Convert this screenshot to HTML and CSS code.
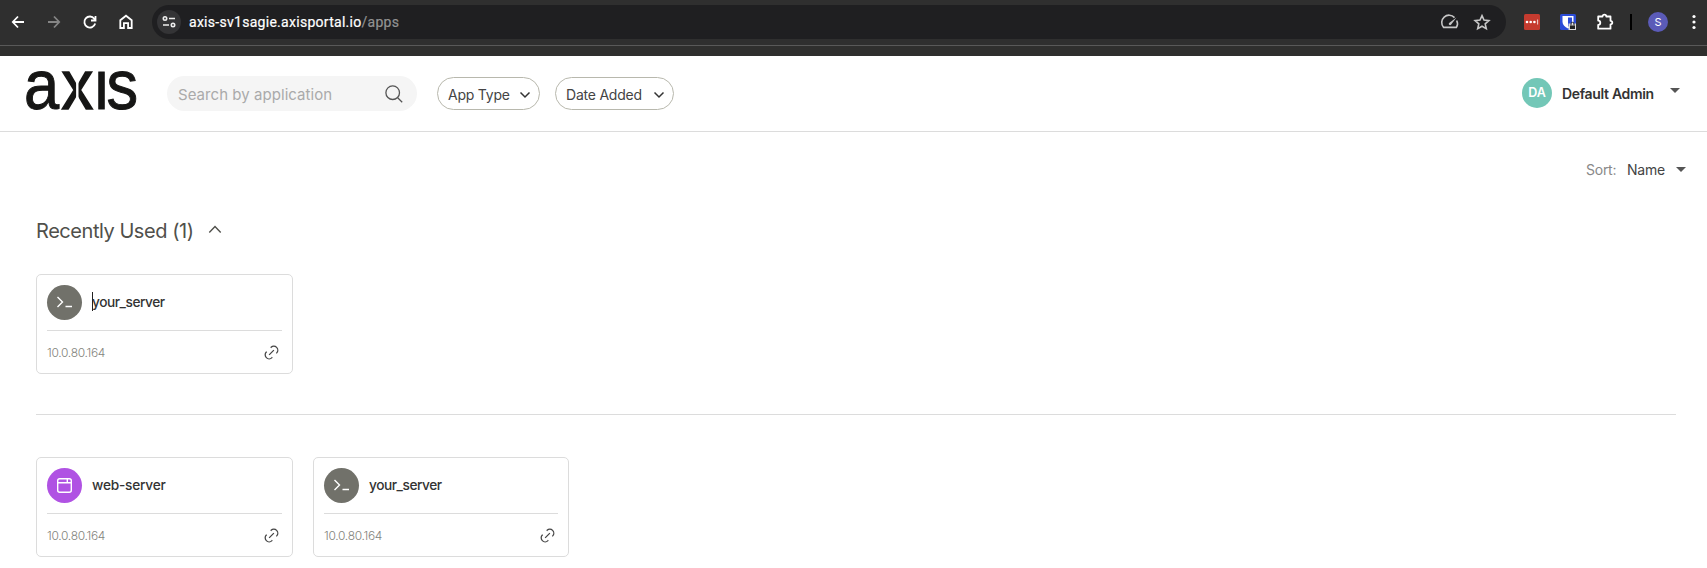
FILE: index.html
```html
<!DOCTYPE html>
<html lang="en">
<head>
<meta charset="utf-8">
<title>Axis apps</title>
<link rel="stylesheet" href="styles.css">
</head>
<body>
<svg class="defs" width="0" height="0">
  <symbol id="terminal" viewBox="0 0 35 35"><path d="M10.5 12.5l5 5-5 5M18.5 22h6.5" transform="translate(0 -.5)"/></symbol>
  <symbol id="window" viewBox="0 0 35 35"><rect x="10.7" y="10.7" width="13.6" height="13.6" rx="2"/><path d="M10.7 14.8h13.6M20.3 10.7v4.1"/></symbol>
  <symbol id="link" viewBox="0 0 24 24"><path d="M9 15l6-6M11 6l.46-.54a5 5 0 0 1 7.07 7.07L18 13M13 18l-.4.53a5.07 5.07 0 0 1-7.13 0 4.97 4.97 0 0 1 0-7.07L6 11"/></symbol>
</svg>
<div class="browser">
  <div class="toolbar">
    <div class="nav">
      <svg width="24" height="24" viewBox="0 0 24 24"><path d="M18 12H7M12 6.5L6.8 12l5.2 5.500"/></svg>
      <svg class="dim" width="24" height="24" viewBox="0 0 24 24"><path d="M6 12h11M12 6.500l5.200 5.500-5.200 5.500"/></svg>
      <svg width="24" height="24" viewBox="0 0 24 24"><path d="M17.200 13.500A5.500 5.500 0 1 1 16.300 8.700L17.300 10M17.500 6v4.500H13"/></svg>
      <svg width="24" height="24" viewBox="0 0 24 24"><path d="M6.300 18V10.300L12 5.700l5.700 4.600V18h-3.600v-4.900H9.900V18z"/></svg>
    </div>
    <div class="address">
      <span class="site"><svg width="24" height="24" viewBox="0 0 24 24"><circle cx="8" cy="8.500" r="1.700"/><path d="M12 8.500h6M6 15h6"/><circle cx="16" cy="15" r="1.700"/></svg></span>
      <span class="url">axis-sv1sagie.axisportal.io<span class="path">/apps</span></span>
      <span class="tools">
        <svg width="20" height="20" viewBox="0 0 20 20"><path d="M14.500 5.600A7 7 0 0 0 3.600 15.400H16.400A7 7 0 0 0 16.700 8.500"/><path class="needle" d="M16.500 5.500L9.100 10.900a1.300 1.300 0 1 0 1.900 1.800z"/></svg>
        <svg width="20" height="20" viewBox="0 0 20 20"><path d="M10 3.600l2 4.500 4.900.5-3.700 3.300 1.100 4.800L10 14.200l-4.300 2.500 1.100-4.800-3.700-3.300 4.900-.5z"/></svg>
      </span>
    </div>
    <div class="extensions">
      <svg width="16" height="16" viewBox="0 0 16 16"><rect width="16" height="16" rx="1.500" fill="#c53b2f"/><g fill="#fff"><circle cx="3" cy="8" r="1.300"/><circle cx="6.700" cy="8" r="1.300"/><circle cx="10.400" cy="8" r="1.300"/><path d="M13.300 5.500h.8v5h-.8z"/></g></svg>
      <svg width="16" height="16" viewBox="0 0 16 16"><rect width="16" height="16" rx="1.500" fill="#2b4bd6"/><path d="M2.500 2h11v6c0 3-2.500 5-5.500 6.500C5 13 2.500 11 2.500 8z" fill="#fff"/><path d="M8 3.500h4V8c0 2-1.500 3.500-4 4.700z" fill="#2b4bd6"/><path d="M8.500 9.500h7.500V16H8.500z" fill="#ddd"/><path d="M10 11.500h5V15h-5z" fill="#222"/><path d="M11 11.500v-1.700a1.500 1.500 0 0 1 3 0v1.700" fill="none" stroke="#222"/></svg>
      <svg width="18" height="18" viewBox="0 0 18 18"><path d="M2.200 3.500h4.300a1.900 1.900 0 0 1 3.800 0h4.200v4.300a1.700 1.700 0 0 1 0 3.600v4.300H2.200v-3.900a2.100 2.100 0 0 0 0-4.200z" fill="none" stroke="#fff" stroke-width="1.800" stroke-linejoin="round"/></svg>
      <span class="bar"></span>
      <span class="profile">S</span>
      <svg class="menu" width="4" height="16" viewBox="0 0 4 16"><circle cx="2" cy="2.500" r="1.600"/><circle cx="2" cy="8" r="1.600"/><circle cx="2" cy="13.500" r="1.600"/></svg>
    </div>
  </div>
</div>
<header class="header">
  <svg class="logo" width="114" height="44" viewBox="0 0 114 44"><text transform="scale(.89 1)" x="-1.200 41 76 91.500" y="40">a<tspan class="wide">x</tspan>ıs</text><path class="gap" d="M52.300 10v24"/></svg>
  <div class="search"><span>Search by application</span>
    <svg width="20" height="20" viewBox="0 0 20 20"><circle cx="8.700" cy="8.700" r="6.800"/><path d="M13.700 13.700l4.500 4.500"/></svg></div>
  <div class="pill type"><span>App Type</span><svg width="12" height="8" viewBox="0 0 12 8"><path d="M1.500 1.500L6 6l4.500-4.500"/></svg></div>
  <div class="pill date"><span>Date Added</span><svg width="12" height="8" viewBox="0 0 12 8"><path d="M1.500 1.500L6 6l4.500-4.500"/></svg></div>
  <div class="user"><span class="avatar">DA</span><span class="name">Default Admin</span><span class="caret"></span></div>
</header>
<main>
  <div class="sort"><span class="label">Sort:</span><span class="value">Name</span><span class="caret"></span></div>
  <h1><span>Recently Used (1)</span><svg width="14" height="9" viewBox="0 0 14 9"><path d="M1.300 7.500L7 1.600l5.700 5.900"/></svg></h1>
  <section class="cards recent">
    <article class="card">
      <div class="top"><svg class="icon" width="35" height="35"><use href="#terminal"/></svg><span class="title cursor">your_server</span></div>
      <div class="bottom"><span>10.0.80.164</span><svg class="link" width="19" height="19"><use href="#link"/></svg></div>
    </article>
  </section>
  <section class="cards">
    <article class="card">
      <div class="top"><svg class="icon purple" width="35" height="35"><use href="#window"/></svg><span class="title web">web-server</span></div>
      <div class="bottom"><span>10.0.80.164</span><svg class="link" width="19" height="19"><use href="#link"/></svg></div>
    </article>
    <article class="card narrow">
      <div class="top"><svg class="icon" width="35" height="35"><use href="#terminal"/></svg><span class="title">your_server</span></div>
      <div class="bottom"><span>10.0.80.164</span><svg class="link" width="19" height="19"><use href="#link"/></svg></div>
    </article>
  </section>
</main>
</body>
</html>
```
FILE: styles.css
```css
* { box-sizing: border-box; }
body { margin: 0; height: 568px; overflow: hidden; background: #fff; color: #333; font-family: Inter, "Liberation Sans", sans-serif; }
svg { display: block; flex: none; fill: none; }
span { white-space: nowrap; }
.defs { position: absolute; }
.browser { height: 56px; background: #2f2f2e; }
.toolbar { height: 46px; padding: 5px 11px 6px 6px; display: flex; background: #2f2f2f; border-bottom: 1px solid #595959; }
.nav { display: flex; gap: 12px; padding-top: 5px; width: 146px; flex: none; }
.nav svg { stroke: #fff; stroke-width: 1.8; }
.nav .dim { stroke: #858585; }
.address { width: 1354px; height: 34px; flex: none; border-radius: 17px; background: #1f1f21; display: flex; align-items: center; padding: 0 14px 0 5px; }
.site { width: 24px; height: 24px; border-radius: 50%; background: #343436; }
.site svg { stroke: #eee; stroke-width: 1.6; }
.url { margin-left: 8px; font: 14px Roboto, sans-serif; color: #fff; letter-spacing: .28px; -webkit-text-stroke: .2px; }
.path { color: #929292; }
.tools { margin-left: auto; display: flex; gap: 12px; }
.tools svg { stroke: #c7c7c7; stroke-width: 1.6; }
.tools .needle { fill: #c7c7c7; stroke: none; }
.extensions { display: flex; align-items: center; height: 34px; margin-left: 18px; }
.extensions svg:nth-child(2) { margin-left: 20px; }
.extensions svg:nth-child(3) { margin-left: 20px; }
.extensions .menu { fill: #fff; }
.bar { width: 2px; height: 16px; background: #000; margin-left: 16px; }
.profile { width: 20px; height: 20px; border-radius: 50%; background: #5b5bb8; color: #fff; font-size: 11px; line-height: 20px; text-align: center; margin: 0 24px 0 16px; }
.header { height: 76px; border-bottom: 1px solid #dcdcdc; display: flex; align-items: flex-start; padding: 0 27px 0 25px; }
.logo { margin-top: 13px; overflow: visible; }
.logo text { font: 71px "Liberation Sans", sans-serif; fill: #161615; stroke: #161615; stroke-width: 1; }
.logo .wide { stroke-width: 1.6; }
.logo .gap { stroke: #fff; stroke-width: 2.4; }
.search { width: 250px; height: 35px; margin: 20px 20px 0 28px; padding: 0 13px 0 11px; border-radius: 18px; background: #f5f5f5; display: flex; align-items: center; justify-content: space-between; font-size: 15px; letter-spacing: .05px; color: #aaa; }
.search span, .pill span { padding-top: 2px; }
.search svg { stroke: #555; stroke-width: 1.3; }
.pill { height: 33px; margin: 21px 15px 0 0; padding: 0 8px 0 10px; border: 1px solid #b8b8ad; border-radius: 17px; display: flex; align-items: center; justify-content: space-between; font-size: 14px; letter-spacing: -.22px; color: #444; }
.type { width: 103px; }
.date { width: 119px; }
.pill svg { stroke: #333; stroke-width: 1.5; margin-top: 2px; }
.user { margin: 22px 0 0 auto; display: flex; align-items: center; }
.avatar { width: 30px; height: 30px; border-radius: 50%; background: #73c7b7; color: #fff; font-size: 12.500px; font-weight: 600; line-height: 30px; text-align: center; margin-right: 10px; }
.name { width: 93px; font-size: 14px; font-weight: 600; letter-spacing: -.33px; }
.caret { border: 5px solid transparent; border-top-color: #555; border-bottom: 0; }
.user .caret { margin: -5px 0 0 15px; }
main { padding: 26px 31px 0 36px; }
.sort { display: flex; justify-content: flex-end; align-items: center; height: 22px; margin-right: -10px; font-size: 14px; letter-spacing: -.25px; }
.label { width: 31px; margin-right: 10px; color: #888; }
.value { width: 39px; margin-right: 10px; color: #444; }
h1 { margin: 39px 0 0; height: 24px; display: flex; align-items: center; font-size: 20px; font-weight: 400; letter-spacing: -.45px; color: #50504b; }
h1 span { width: 172px; }
h1 svg { stroke: #50504b; stroke-width: 1.4; margin-top: -3px; }
.cards { display: flex; gap: 20px; }
.recent { margin-top: 31px; padding-bottom: 40px; border-bottom: 1px solid #dcdcdc; margin-bottom: 42px; }
.card { width: 257px; height: 100px; border: 1px solid #dcdcdc; border-radius: 5px; padding: 10px; }
.card.narrow { width: 256px; }
.top { height: 46px; border-bottom: 1px solid #dcdcdc; display: flex; }
.icon { border-radius: 50%; background: #71716a; stroke: #fff; stroke-width: 1.4; }
.purple { background: #b052e3; }
.title { height: 35px; line-height: 35px; margin-left: 10px; font-size: 13.700px; font-weight: 500; letter-spacing: -.45px; position: relative; }
.title.web { letter-spacing: -.22px; }
.cursor::before { content: ""; position: absolute; left: 0; top: 7px; width: 1px; height: 19px; background: #222; }
.bottom { height: 43px; display: flex; align-items: center; justify-content: space-between; padding-right: 1px; font-size: 12px; font-weight: 300; letter-spacing: -.3px; color: #84847d; }
.link { stroke: #444; stroke-width: 1.6; }
```
